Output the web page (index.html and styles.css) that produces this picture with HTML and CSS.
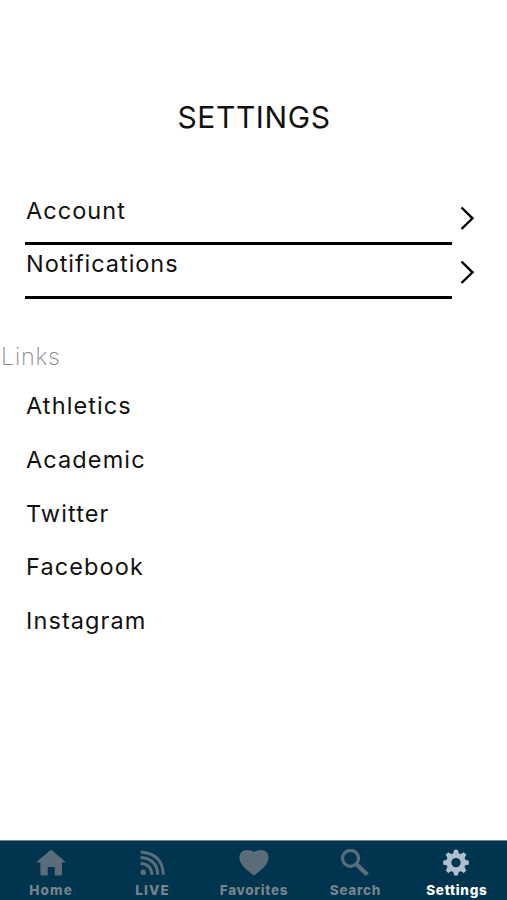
FILE: index.html
```html
<!DOCTYPE html>
<html lang="en">

<head>
    <meta charset="UTF-8">
    <title>Settings</title>
    <link rel="stylesheet" href="styles.css">
</head>

<body>

    <h1 class="title">SETTINGS</h1>

    <main class="content">
        <ul class="options">
            <li class="option">
                <span class="option-name account">Account</span>
                <svg class="chevron" viewBox="0 0 16 26"><path d="M1.5 2.5 L12.5 13.3 L1.5 24"/></svg>
            </li>
            <li class="option">
                <span class="option-name notifications">Notifications</span>
                <svg class="chevron" viewBox="0 0 16 26"><path d="M1.5 2.5 L12.5 13.3 L1.5 24"/></svg>
            </li>
        </ul>

        <h2 class="section">Links</h2>
        <ul class="links">
            <li class="link">Athletics</li>
            <li class="link">Academic</li>
            <li class="link">Twitter</li>
            <li class="link">Facebook</li>
            <li class="link">Instagram</li>
        </ul>
    </main>

    <nav class="tabs">
        <div class="tab">
            <svg class="icon" viewBox="0 0 30 28">
                <path d="M13.8 1.4 Q15 .5 16.2 1.4 L28.8 12.2 Q29.6 13.4 28.2 13.6 H26 V25 Q26 26.5 24.5 26.5 H18.7 V18 H11.8 V26.5 H6 Q4.4 26.5 4.4 25 V13.6 H2 Q.5 13.3 1.4 12.2 Z"/>
            </svg>
            <span class="label home">Home</span>
        </div>
        <div class="tab">
            <svg class="icon" viewBox="0 0 30 28">
                <circle cx="6.2" cy="23.2" r="2.8"/>
                <path class="wave" d="M3.6 14.2 Q14.2 15 15 25.8 M3.6 8.5 Q20 9.5 20.8 25.8 M3.6 3 Q25.5 4.5 26.4 25.8"/>
            </svg>
            <span class="label live">LIVE</span>
        </div>
        <div class="tab">
            <svg class="icon" viewBox="0 0 30 28">
                <path d="M15 26.6 C11 23.5 .4 16.5 .4 8.5 C.4 3.7 3.6 .9 7.8 .9 C11 .9 13.6 1.6 15 3 C16.4 1.6 19 .9 22.2 .9 C26.4 .9 29.6 3.7 29.6 8.5 C29.6 16.5 19 23.5 15 26.6 Z"/>
            </svg>
            <span class="label">Favorites</span>
        </div>
        <div class="tab">
            <svg class="icon" viewBox="0 0 30 28">
                <circle class="lens" cx="10.5" cy="9.3" r="8"/>
                <path class="handle" d="M16.4 15.4 L27.4 25.6"/>
            </svg>
            <span class="label">Search</span>
        </div>
        <div class="tab active">
            <svg class="icon" viewBox="0 0 30 28">
                <circle class="gear" cx="15" cy="13.6" r="7.2"/>
                <g>
                    <path d="M12 5 L13.2 .8 H16.8 L18 5 Z"/>
                    <path d="M12 5 L13.2 .8 H16.8 L18 5 Z" transform="rotate(45 15 13.6)"/>
                    <path d="M12 5 L13.2 .8 H16.8 L18 5 Z" transform="rotate(90 15 13.6)"/>
                    <path d="M12 5 L13.2 .8 H16.8 L18 5 Z" transform="rotate(135 15 13.6)"/>
                    <path d="M12 5 L13.2 .8 H16.8 L18 5 Z" transform="rotate(180 15 13.6)"/>
                    <path d="M12 5 L13.2 .8 H16.8 L18 5 Z" transform="rotate(225 15 13.6)"/>
                    <path d="M12 5 L13.2 .8 H16.8 L18 5 Z" transform="rotate(270 15 13.6)"/>
                    <path d="M12 5 L13.2 .8 H16.8 L18 5 Z" transform="rotate(315 15 13.6)"/>
                </g>
            </svg>
            <span class="label">Settings</span>
        </div>
    </nav>

</body>

</html>
```
FILE: styles.css
```css
* {
    box-sizing: border-box;
}

body {
    display: flex;
    flex-direction: column;
    height: 900px;
    margin: 0;
    overflow: hidden;
    background-color: #fff;
    color: #111;
    font-family: Inter, "Open Sans", sans-serif;
}

ul {
    margin: 0;
    padding: 0;
    list-style: none;
}

.title {
    margin: 97px 0 0;
    padding-left: 1px;
    font-size: 30px;
    font-weight: 400;
    line-height: 40px;
    letter-spacing: 0.6px;
    text-align: center;
}

.content {
    flex: 1;
    padding-top: 54px;
}

.option {
    display: flex;
    height: 54px;
    padding-left: 25px;
}

.option-name {
    width: 427px;
    height: 54px;
    padding: 4px 0 0 1px;
    border-bottom: 3px solid #000;
    font-size: 23.5px;
    font-weight: 400;
    line-height: 30px;
}

.account {
    padding-top: 5px;
    letter-spacing: 1.05px;
}

.notifications {
    letter-spacing: 0.95px;
}

.chevron {
    width: 16px;
    height: 26px;
    margin: 14px 0 0 8px;
    fill: none;
    stroke: #000;
    stroke-width: 2.4;
}

.section {
    margin: 43px 0 0;
    padding-left: 1px;
    color: #888;
    font-size: 23.5px;
    font-weight: 200;
    line-height: 30px;
    letter-spacing: 0.7px;
}

.links {
    padding: 7px 0 0 26px;
}

.link {
    height: 53.8px;
    padding-top: 12px;
    font-size: 23.5px;
    font-weight: 400;
    line-height: 30px;
    letter-spacing: 1.1px;
}

.tabs {
    display: flex;
    height: 60px;
    border-top: 1px solid #6d8795;
    background-color: #00344f;
}

.tab {
    display: flex;
    flex: 1;
    flex-direction: column;
    align-items: center;
    padding-top: 8px;
    color: #75838b;
}

.icon {
    width: 30px;
    height: 28px;
    fill: #5b6d78;
}

.wave,
.lens,
.handle,
.gear {
    fill: none;
    stroke: #5b6d78;
    stroke-width: 3;
}

.lens {
    stroke-width: 3.2;
}

.handle {
    stroke-width: 4.2;
}

.label {
    margin: 4px -1px 0 0;
    font-size: 13.5px;
    font-weight: 800;
    line-height: 18px;
    letter-spacing: 0.7px;
}

.home,
.live {
    letter-spacing: 1.2px;
}

.active {
    color: #fff;
}

.active .icon {
    fill: #adbfce;
}

.gear {
    stroke: #adbfce;
    stroke-width: 5;
}
```
